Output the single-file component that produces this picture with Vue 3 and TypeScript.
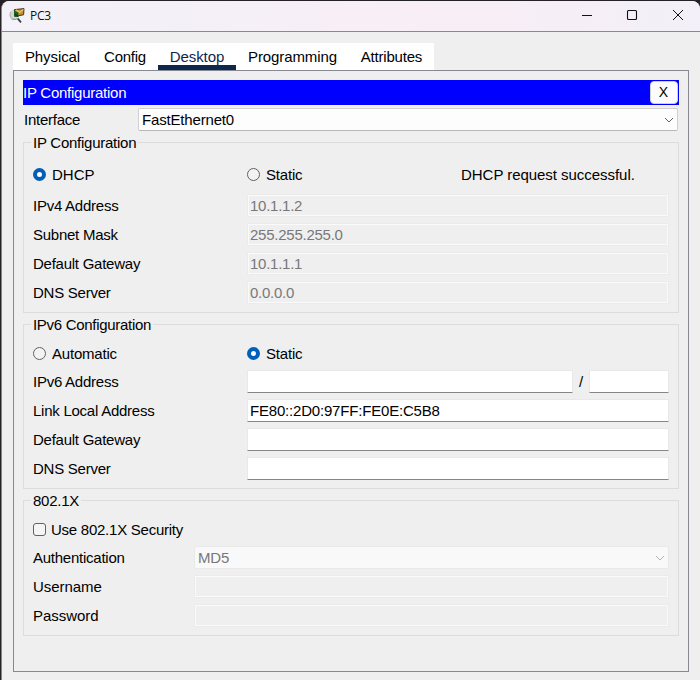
<script setup lang="ts">
import { ref } from 'vue'

interface Field {
  label: string
  value: string
}

const tabs: string[] = ['Physical', 'Config', 'Desktop', 'Programming', 'Attributes']
const activeTab = ref<string>('Desktop')
const ipv4Mode = ref<'dhcp' | 'static'>('dhcp')
const ipv6Mode = ref<'auto' | 'static'>('static')
const security = ref<boolean>(false)

const ipv4Fields: Field[] = [
  { label: 'IPv4 Address', value: '10.1.1.2' },
  { label: 'Subnet Mask', value: '255.255.255.0' },
  { label: 'Default Gateway', value: '10.1.1.1' },
  { label: 'DNS Server', value: '0.0.0.0' },
]
const ipv6Fields: Field[] = [
  { label: 'Link Local Address', value: 'FE80::2D0:97FF:FE0E:C5B8' },
  { label: 'Default Gateway', value: '' },
  { label: 'DNS Server', value: '' },
]
const credentials: string[] = ['Username', 'Password']
</script>

<template>
  <div class="desktop">
    <div class="window">
      <header class="titlebar">
        <svg class="app-icon" width="17" height="16" viewBox="0 0 17 16">
          <ellipse cx="4.6" cy="6.8" rx="4.3" ry="4.8" fill="#d3d5d8" />
          <path d="M1.6 4Q0.2 7 2.2 10.2" fill="none" stroke="#b2b4b6" />
          <path d="M5.4 1.6L15 0.6L14.6 6.8L6 8.4Z" fill="#c98f35" stroke="#33290f" stroke-width=".9" />
          <path d="M7 1.8L10.6 4.4L14.4 1.4" fill="none" stroke="#f1ce78" stroke-width="1.1" />
          <path d="M5 2.6L9.4 4.6L9.6 9L5 8.6Z" fill="#16651b" />
          <path d="M6 6.2L9 8.4" stroke="#0a3a10" stroke-width="1.2" />
          <path d="M8.6 10.4L12 14.4" stroke="#3a3d42" stroke-width="1.7" />
          <path d="M2.6 11Q6 12.4 9.4 10.2" fill="none" stroke="#8a8d90" />
        </svg>
        <span class="title">PC3</span>
        <div class="controls">
          <svg width="46" height="29" viewBox="0 0 46 29"><path d="M18 14.5H28" stroke="#111" fill="none" /></svg>
          <svg width="45" height="29" viewBox="0 0 45 29"><rect x="17.5" y="9.5" width="9" height="9" rx="1" stroke="#111" stroke-width="1.1" fill="none" /></svg>
          <svg width="46" height="29" viewBox="0 0 46 29"><path d="M18 9L28 19M28 9L18 19" stroke="#111" fill="none" /></svg>
        </div>
      </header>

      <main class="content">
        <nav class="tabs">
          <button v-for="t in tabs" :key="t" class="tab" :class="[t.toLowerCase(), { active: t === activeTab }]" @click="activeTab = t">{{ t }}</button>
        </nav>

        <section class="panel">
          <div class="banner">
            <span>IP Configuration</span>
            <button class="close">X</button>
          </div>

          <div class="interface">
            <span>Interface</span>
            <div class="select">
              <span>FastEthernet0</span>
              <svg width="10" height="6" viewBox="0 0 10 6"><path d="M1 1L5 5L9 1" fill="none" stroke="#606060" /></svg>
            </div>
          </div>

          <fieldset class="group ipv4">
            <legend>IP Configuration</legend>
            <div class="modes">
              <label class="wide" @click="ipv4Mode = 'dhcp'"><i class="radio" :class="{ on: ipv4Mode === 'dhcp' }"></i>DHCP</label>
              <label @click="ipv4Mode = 'static'"><i class="radio" :class="{ on: ipv4Mode === 'static' }"></i>Static</label>
              <span class="status">DHCP request successful.</span>
            </div>
            <div v-for="f in ipv4Fields" :key="f.label" class="row">
              <span>{{ f.label }}</span>
              <div class="field disabled">{{ f.value }}</div>
            </div>
          </fieldset>

          <fieldset class="group ipv6">
            <legend>IPv6 Configuration</legend>
            <div class="modes">
              <label @click="ipv6Mode = 'auto'"><i class="radio" :class="{ on: ipv6Mode === 'auto' }"></i>Automatic</label>
              <label @click="ipv6Mode = 'static'"><i class="radio" :class="{ on: ipv6Mode === 'static' }"></i>Static</label>
            </div>
            <div class="row">
              <span>IPv6 Address</span>
              <div class="prefixed">
                <div class="field"></div>
                <span>/</span>
                <div class="field"></div>
              </div>
            </div>
            <div v-for="f in ipv6Fields" :key="f.label" class="row">
              <span>{{ f.label }}</span>
              <div class="field address">{{ f.value }}</div>
            </div>
          </fieldset>

          <fieldset class="group dot1x">
            <legend>802.1X</legend>
            <label class="check" @click="security = !security"><i class="box"></i>Use 802.1X Security</label>
            <div class="row">
              <span>Authentication</span>
              <div class="select disabled">
                <span>MD5</span>
                <svg width="10" height="6" viewBox="0 0 10 6"><path d="M1 1L5 5L9 1" fill="none" stroke="#b4b4b4" /></svg>
              </div>
            </div>
            <div v-for="c in credentials" :key="c" class="row">
              <span class="credential">{{ c }}</span>
              <div class="field disabled"></div>
            </div>
          </fieldset>
        </section>
      </main>
    </div>
  </div>
</template>

<style>
body {
  margin: 0;
  overflow: hidden;
}
</style>

<style scoped>
* {
  box-sizing: border-box;
}
.desktop {
  width: 700px;
  height: 680px;
  padding: 1px 0 0 1px;
  background: #242127;
  font: 15px/17px "Liberation Sans", Arial, sans-serif;
  letter-spacing: -0.25px;
  color: #000;
}
.window {
  height: 679px;
  border-left: 1px solid #85858b;
  border-radius: 8px 8px 0 0;
  background: #efefef;
  overflow: hidden;
}
.titlebar {
  display: flex;
  align-items: flex-start;
  height: 31px;
  padding-left: 7px;
  border-bottom: 1px solid #868993;
  background: linear-gradient(90deg, #f3f1f9 0%, #f4f0f8 25%, #f9eef6 60%, #f6eef7 80%, #f2f0f8 100%);
}
.app-icon {
  margin-top: 7px;
}
.title {
  margin: 6px 0 0 4px;
  font: 12px/17px "Open Sans", "Noto Sans", sans-serif;
  color: #111;
}
.controls {
  display: flex;
  margin-left: auto;
  margin-right: -1px;
}
.content {
  padding: 11px 11px 8px;
}
.tabs {
  display: flex;
  width: 421px;
  height: 27px;
  background: #fff;
}
.tab {
  display: block;
  height: 27px;
  padding: 5px 0;
  border: 0;
  background: none;
  color: #000;
  font: inherit;
  letter-spacing: -0.1px;
  text-align: center;
}
.tab.physical {
  width: 79px;
}
.tab.config {
  width: 66px;
  letter-spacing: -0.25px;
}
.tab.desktop {
  width: 78px;
  height: 27px;
  padding: 5px 0 0;
}
.tab.programming {
  width: 113px;
}
.tab.attributes {
  width: 85px;
  letter-spacing: -0.2px;
}
.tab.active {
  padding-bottom: 0;
  border-bottom: 5px solid #0d274d;
  background: #fff;
  color: #0d274d;
}
.panel {
  width: 676px;
  height: 602px;
  padding: 9px;
  border: 1px solid #868993;
}
.banner {
  display: flex;
  align-items: center;
  justify-content: space-between;
  height: 25px;
  padding-right: 1px;
  background: #00f;
  color: #fff;
}
.close {
  width: 28px;
  height: 23px;
  padding: 0 1px 0 0;
  border: 1px solid #d0d0d0;
  border-radius: 4px;
  background: #fdfdfd;
  color: #000;
  font: inherit;
  font-size: 14px;
}
.interface {
  display: grid;
  grid-template-columns: 115px 540px;
  align-items: center;
  height: 23px;
  margin-top: 3px;
}
.interface > span {
  padding-left: 1px;
}
.select {
  display: flex;
  align-items: center;
  justify-content: space-between;
  height: 23px;
  padding: 0 3px;
  border: 1px solid #d0d0d0;
  border-bottom-color: #b9b9b9;
  border-radius: 2px;
  background: #fdfdfd;
  letter-spacing: -0.17px;
}
.select.disabled {
  border-color: #e9e9e9;
  background: #f9f9f9;
  color: #787878;
}
.group {
  width: 656px;
  margin: 0;
  padding: 0 9px;
  border: 1px solid #dcdcdc;
}
.group legend {
  height: 17px;
  margin-left: -2px;
  padding: 0 2px;
}
.ipv4 {
  height: 179px;
  margin-top: 3px;
}
.ipv6 {
  height: 173px;
  margin-top: 3px;
}
.ipv6 legend {
  letter-spacing: -0.3px;
}
.dot1x {
  height: 144px;
  margin-top: 3px;
}
.modes {
  display: grid;
  grid-template-columns: 214px 214px 1fr;
  height: 17px;
}
.ipv4 .modes {
  margin: 15px 0 11px;
}
.ipv6 .modes {
  margin: 12px 0 8px;
}
.modes label,
.check {
  display: flex;
  align-items: center;
}
.modes label {
  letter-spacing: -0.2px;
}
.modes .wide {
  letter-spacing: 0;
}
.status {
  letter-spacing: -0.04px;
}
.radio {
  width: 13px;
  height: 13px;
  margin-right: 6px;
  border: 1px solid #626262;
  border-radius: 50%;
  background: #f3f3f3;
}
.radio.on {
  border: 4px solid #005fb8;
  background: #fff;
}
.row {
  display: grid;
  grid-template-columns: 214px 422px;
  align-items: center;
  height: 23px;
  margin-bottom: 6px;
}
.dot1x .row {
  grid-template-columns: 161px 475px;
}
.credential {
  letter-spacing: -0.05px;
}
.field {
  height: 23px;
  padding: 2px 2px 0;
  border: 1px solid #e8e8e8;
  border-bottom-color: #868686;
  border-radius: 1px;
  background: #fff;
}
.field.address {
  letter-spacing: -0.19px;
}
.field.disabled {
  border-color: #ebebeb;
  background: #efefef;
  box-shadow: inset 0 0 0 1px #fafafa;
  color: #787878;
}
.prefixed {
  display: grid;
  grid-template-columns: 326px 16px 80px;
  align-items: center;
  text-align: center;
}
.check {
  height: 17px;
  margin: 12px 0 8px;
}
.box {
  width: 13px;
  height: 13px;
  margin-right: 5px;
  border: 1px solid #626262;
  border-radius: 3px;
  background: #f5f5f5;
}
</style>
